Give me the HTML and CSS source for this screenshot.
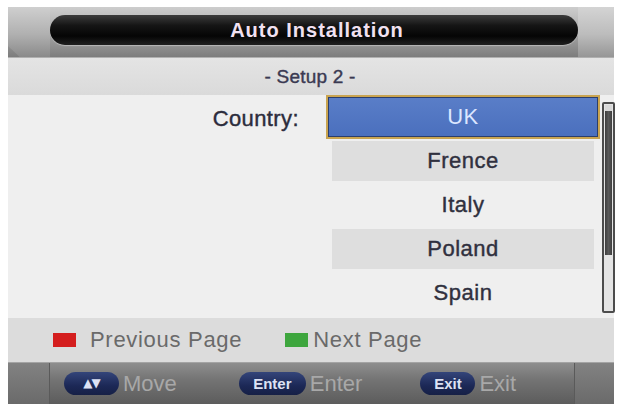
FILE: index.html
```html
<!DOCTYPE html>
<html>
<head>
<meta charset="utf-8">
<link rel="stylesheet" href="styles.css">
</head>
<body>
<div class="screen">
  <header class="hdr">
    <div class="corner left"></div>
    <div class="pill">Auto Installation</div>
    <div class="corner right"></div>
  </header>
  <div class="sub">- Setup 2 -</div>
  <main class="main">
    <div class="label">Country:</div>
    <ul class="list">
      <li class="item sel">UK</li>
      <li class="item alt">Frence</li>
      <li class="item">Italy</li>
      <li class="item alt">Poland</li>
      <li class="item">Spain</li>
    </ul>
    <div class="scroll"><div class="thumb"></div></div>
  </main>
  <div class="keys">
    <span class="sq red"></span><span class="klabel">Previous Page</span>
    <span class="sq green"></span><span class="klabel next">Next Page</span>
  </div>
  <nav class="nav">
    <div class="nblock"></div>
    <span class="btn b-move">▲▼</span><span class="ntext">Move</span>
    <span class="btn b-enter">Enter</span><span class="ntext">Enter</span>
    <span class="btn b-exit">Exit</span><span class="ntext">Exit</span>
    <div class="nblock rb"></div>
  </nav>
</div>
</body>
</html>
```
FILE: styles.css
```css
* { box-sizing: border-box; }
html, body { margin: 0; padding: 0; background: #ffffff; }
body { font-family: "Liberation Sans", Arial, sans-serif; overflow: hidden; }

.screen {
  margin: 7px 0 0 8px;
  width: 606px;
  display: flex;
  flex-direction: column;
}

/* header */
.hdr {
  height: 51px;
  display: flex;
  align-items: flex-start;
  background: linear-gradient(#cdcdcd 0%, #b4b4b4 35%, #979797 70%, #7c7c7c 100%);
  border-bottom: 1px solid #b0b0b0;
}
.corner {
  width: 42px;
  height: 50px;
  background: linear-gradient(#cfcfcf, #b0b0b0 55%, #8a8a8a);
}
.corner.left { clip-path: polygon(0 0, 100% 0, 100% 100%, 28% 100%, 0 78%); }
.corner.right { width: 36px; margin-left: auto; background: linear-gradient(#d4d4d4, #bcbcbc 55%, #969696); }
.pill {
  margin-top: 8px;
  width: 528px;
  height: 30px;
  border-radius: 15px;
  background: linear-gradient(#3c3c3c 0%, #151515 35%, #050505 70%, #202020 100%);
  box-shadow: 0 1px 1px rgba(255,255,255,0.35);
  color: #f1e1f1;
  font-weight: bold;
  font-size: 20px;
  letter-spacing: 1px;
  line-height: 30px;
  text-align: center;
  padding-left: 6px;
}

/* sub band */
.sub {
  height: 37px;
  background: linear-gradient(#e4e4e4, #dadada);
  color: #3a3a52;
  font-size: 19px;
  letter-spacing: 0.2px;
  -webkit-text-stroke: 0.4px #3a3a52;
  line-height: 37px;
  text-align: center;
  padding-right: 2px;
}

/* main */
.main {
  height: 223px;
  background: #efefef;
  display: grid;
  grid-template-columns: 316px 274px 13px;
  column-gap: 2px;
  align-items: start;
}
.label {
  padding: 2px 25px 0 0;
  text-align: right;
  font-size: 22px;
  letter-spacing: 0.4px;
  -webkit-text-stroke: 0.4px #2c2c3c;
  line-height: 44px;
  color: #2c2c3c;
}
.list { list-style: none; margin: 0; padding: 0; }
.item {
  height: 44px;
  line-height: 44px;
  text-align: center;
  font-size: 22px;
  color: #30303e;
  -webkit-text-stroke: 0.4px #30303e;
  letter-spacing: 0.5px;
}
.item.sel {
  border: 2px solid #c9a450;
  background: linear-gradient(#5a7ec8, #4a6fbd);
  box-shadow: inset 0 0 0 1px #2c3e6a;
  color: #dce6ff;
  -webkit-text-stroke: 0;
  line-height: 40px;
}
.item.alt {
  height: 40px;
  line-height: 40px;
  margin: 2px 6px;
  background: #dedede;
}
.scroll {
  margin-top: 7px;
  height: 211px;
  border: 2px solid #4c4c4c;
  border-radius: 2px;
  background: #e4e4e4;
  padding: 1px;
}
.thumb {
  height: 150px;
  background: linear-gradient(90deg, #3e3e3e, #5a5a5a 50%, #3e3e3e);
  border-top: 6px solid #d8d8d8;
}

/* color keys */
.keys {
  height: 44px;
  background: #dcdcdc;
  display: flex;
  align-items: center;
  font-size: 22px;
  letter-spacing: 0.7px;
  color: #6a6a6a;
}
.sq { width: 23px; height: 14px; display: inline-block; }
.red { background: #d41e1e; margin-left: 45px; }
.green { background: #3ea63e; margin-left: 43px; }
.klabel { margin-left: 14px; }
.klabel.next { margin-left: 5px; }

/* nav bar */
.nav {
  height: 42px;
  display: flex;
  align-items: center;
  background: linear-gradient(#8e8e8e 0%, #747474 40%, #5c5c5c 100%);
  border-top: 1px solid #a4a4a4;
}
.nblock {
  width: 42px;
  height: 100%;
  border-right: 1px solid #5a5a5a;
  background: linear-gradient(#828282, #6a6a6a);
}
.nblock.rb { width: 40px; margin-left: auto; border-right: none; border-left: 1px solid #5a5a5a; }
.btn {
  height: 23px;
  border-radius: 12px;
  background: linear-gradient(#34457a, #1c2856 60%, #162046);
  color: #dde2f4;
  font-weight: bold;
  font-size: 15px;
  line-height: 23px;
  text-align: center;
}
.b-move { width: 55px; margin-left: 14px; font-family: "DejaVu Sans", sans-serif; font-size: 12px; letter-spacing: -1px; }
.b-enter { width: 67px; margin-left: 62px; }
.b-exit { width: 55px; margin-left: 58px; }
.ntext {
  margin-left: 4px;
  font-size: 22px;
  color: #a8a8a8;
}
```
